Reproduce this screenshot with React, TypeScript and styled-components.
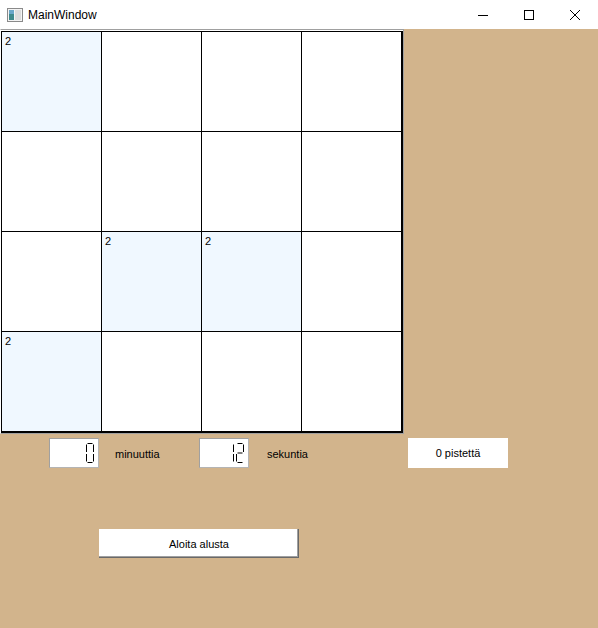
import React from 'react';
import styled, { createGlobalStyle } from 'styled-components';

const Global = createGlobalStyle`
  html, body { margin: 0; padding: 0; }
  body {
    width: 598px;
    height: 628px;
    overflow: hidden;
    background: #d2b48c;
    font-family: "Liberation Sans", "Noto Sans", sans-serif;
    font-size: 11px;
    color: #000;
  }
`;

const Window = styled.div`
  width: 598px;
  height: 628px;
  display: flex;
  flex-direction: column;
  background: #d2b48c;
`;

const TitleBar = styled.div`
  height: 29px;
  flex-shrink: 0;
  background: #fff;
  display: flex;
  align-items: center;
`;

const AppIcon = styled.svg`
  margin-left: 7px;
  width: 16px;
  height: 16px;
  flex-shrink: 0;
`;

const Title = styled.span`
  margin-left: 5px;
  font-size: 12px;
  color: #000;
  flex: 1;
`;

const WinButton = styled.div`
  width: 46px;
  height: 29px;
  display: flex;
  align-items: center;
  justify-content: center;
`;

const BoardFrame = styled.div`
  align-self: flex-start;
  border-top: 1px solid #a0a0a0;
  border-left: 1px solid #fff;
  border-right: 1px solid #a0a0a0;
  border-bottom: 1px solid #a0a0a0;
  padding-top: 1px;
  background: #fff;
`;

const Board = styled.div`
  display: grid;
  grid-template-columns: repeat(4, 99px);
  grid-auto-rows: 99px;
  gap: 1px;
  background: #000;
  border: 1px solid #000;
  border-right-width: 2px;
  border-bottom-width: 2px;
`;

const Cell = styled.div<{ $filled: boolean }>`
  background: ${(p) => (p.$filled ? '#f0f8ff' : '#fff')};
  padding: 2px 0 0 3px;
  font-size: 11px;
  line-height: 14px;
`;

const ControlsRow = styled.div`
  margin-top: 4px;
  display: flex;
  align-items: center;
  height: 30px;
`;

const Lcd = styled.div<{ $offset: number }>`
  margin-left: ${(p) => p.$offset}px;
  width: 50px;
  height: 30px;
  box-sizing: border-box;
  background: #fff;
  border: 1px solid #b4b4b4;
  border-top-color: #a0a0a0;
  border-left-color: #a0a0a0;
  display: flex;
  align-items: center;
  justify-content: flex-end;
  padding-right: 4px;
`;

const Label = styled.span<{ $offset: number; $width: number }>`
  margin-left: ${(p) => p.$offset}px;
  width: ${(p) => p.$width}px;
  font-size: 11px;
  padding-top: 1px;
`;

const ScoreBox = styled.div`
  width: 100px;
  height: 30px;
  background: #fff;
  display: flex;
  align-items: center;
  justify-content: center;
  font-size: 11px;
`;

const RestartButton = styled.button`
  margin-top: 61px;
  margin-left: 99px;
  width: 200px;
  height: 29px;
  background: #fff;
  border: none;
  padding: 0;
  font-family: "Liberation Sans", "Noto Sans", sans-serif;
  font-size: 11px;
  color: #000;
  box-shadow: inset -1px -1px 0 #696969, inset -2px -2px 0 #a0a0a0, inset 1px 1px 0 #fff;
`;

const SEG: Record<string, [number, number, number, number]> = {
  a: [1.5, 0.5, 6.5, 0.5],
  b: [7.5, 1.5, 7.5, 9],
  c: [7.5, 11, 7.5, 18.5],
  d: [1.5, 19.5, 6.5, 19.5],
  e: [0.5, 11, 0.5, 18.5],
  f: [0.5, 1.5, 0.5, 9],
  g: [1.5, 10, 6.5, 10],
};

const DIGITS: Record<string, string> = {
  '0': 'abcdef',
  '1': 'bc',
  '2': 'abged',
  '3': 'abgcd',
  '4': 'fgbc',
  '5': 'afgcd',
  '6': 'afgedc',
  '7': 'abc',
  '8': 'abcdefg',
  '9': 'abcdfg',
};

const LcdDigits: React.FC<{ value: string }> = ({ value }) => {
  const w = value.length * 10 - 2;
  return (
    <svg width={w} height={20} viewBox={`0 0 ${w} 20`}>
      {value.split('').map((ch, i) =>
        DIGITS[ch].split('').map((s) => {
          const [x1, y1, x2, y2] = SEG[s];
          return (
            <line
              key={`${i}${s}`}
              x1={x1 + i * 10}
              y1={y1}
              x2={x2 + i * 10}
              y2={y2}
              stroke="#000"
              strokeWidth={1}
            />
          );
        })
      )}
    </svg>
  );
};

const values = [2, 0, 0, 0, 0, 0, 0, 0, 0, 2, 2, 0, 2, 0, 0, 0];

export default function App() {
  return (
    <>
      <Global />
      <Window>
        <TitleBar>
          <AppIcon viewBox="0 0 16 16">
            <rect x="0.5" y="1.5" width="15" height="13" fill="#f4f4f4" stroke="#8a8a8a" />
            <rect x="2" y="3" width="5" height="10" fill="#3f8a8c" />
            <rect x="2" y="3" width="5" height="4" fill="#6aa7c9" />
            <rect x="8" y="3" width="6" height="10" fill="#dcdcdc" />
          </AppIcon>
          <Title>MainWindow</Title>
          <WinButton>
            <svg width="10" height="10" viewBox="0 0 10 10">
              <line x1="0" y1="5.5" x2="10" y2="5.5" stroke="#000" strokeWidth="1" />
            </svg>
          </WinButton>
          <WinButton>
            <svg width="10" height="10" viewBox="0 0 10 10">
              <rect x="0.5" y="0.5" width="9" height="9" fill="none" stroke="#000" strokeWidth="1" />
            </svg>
          </WinButton>
          <WinButton>
            <svg width="10" height="10" viewBox="0 0 10 10">
              <path d="M0 0 L10 10 M10 0 L0 10" stroke="#000" strokeWidth="1" />
            </svg>
          </WinButton>
        </TitleBar>
        <BoardFrame>
          <Board>
            {values.map((v, i) => (
              <Cell key={i} $filled={v > 0}>
                {v > 0 ? v : ''}
              </Cell>
            ))}
          </Board>
        </BoardFrame>
        <ControlsRow>
          <Lcd $offset={49}>
            <LcdDigits value="0" />
          </Lcd>
          <Label $offset={16} $width={84}>minuuttia</Label>
          <Lcd $offset={0}>
            <LcdDigits value="12" />
          </Lcd>
          <Label $offset={18} $width={141}>sekuntia</Label>
          <ScoreBox>0 pistettä</ScoreBox>
        </ControlsRow>
        <div>
          <RestartButton>Aloita alusta</RestartButton>
        </div>
      </Window>
    </>
  );
}
